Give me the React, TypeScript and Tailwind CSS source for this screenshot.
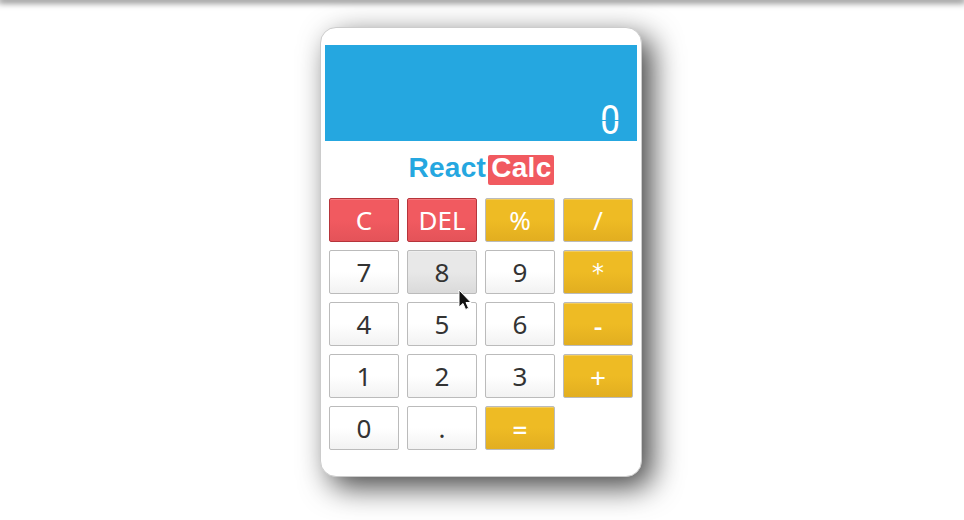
type Tone = 'light' | 'hover' | 'red' | 'gold';

const tones: Record<Tone, string> = {
  light: 'border-[#bbb] text-[#333] bg-[linear-gradient(#fff_50%,#f2f2f2)] shadow-[inset_0_1px_0_#fff]',
  hover: 'border-[#bbb] text-[#333] bg-[linear-gradient(#e8e8e8_50%,#dadada)] shadow-[inset_0_1px_0_#eee]',
  red: 'border-[#b6343b] text-white bg-[linear-gradient(#f15a60_50%,#e45359)] shadow-[inset_0_1px_0_#f47b80]',
  gold: 'border-[#bbb] text-white bg-[linear-gradient(#eebb24_50%,#e2ae20)] shadow-[inset_0_1px_0_#f3cc5b]',
};

const keys: [string, Tone][] = [
  ['C', 'red'], ['DEL', 'red'], ['%', 'gold'], ['/', 'gold'],
  ['7', 'light'], ['8', 'hover'], ['9', 'light'], ['*', 'gold'],
  ['4', 'light'], ['5', 'light'], ['6', 'light'], ['-', 'gold'],
  ['1', 'light'], ['2', 'light'], ['3', 'light'], ['+', 'gold'],
  ['0', 'light'], ['.', 'light'], ['=', 'gold'],
];

// Operators sit slightly lower and heavier than the digits.
function glyphStyle(label: string) {
  if (label === '*') return "pt-px font-['DejaVu_Sans',sans-serif] text-[24px]";
  if (label === '=') return "pt-[2px] font-['Noto_Sans',sans-serif] text-[26px] font-semibold";
  if (label === '-') return "pt-[2px] font-['Noto_Sans',sans-serif] text-[27px] font-medium";
  if (label === '+') return "pt-[2px] font-['Noto_Sans',sans-serif] text-[28px]";
  return "pb-px font-['Noto_Sans',sans-serif] text-[26px]";
}

function Key({ label, tone }: { label: string; tone: Tone }) {
  return (
    <button
      className={`flex h-11 items-center justify-center rounded-[2px] border leading-none ${glyphStyle(label)} ${tones[tone]}`}
    >
      {label}
    </button>
  );
}

export default function App() {
  return (
    <div className="relative h-[520px] w-full overflow-hidden bg-white">
      <div className="h-0 w-full shadow-[0_0_7px_2px_#444]" />
      <main className="mt-[27px] ml-[320px] h-[450px] w-[322px] rounded-[16px] border border-[#ccc] bg-white px-1 pt-[17px] shadow-[10px_10px_30px_#444]">
        <div className="flex h-24 items-end justify-end bg-[#25a7e0] pr-[17px] pb-[5px]">
          <span className="relative block origin-right scale-x-[0.86] font-['Roboto',sans-serif] text-[41px] leading-[31px] text-white">
            0
            <span className="absolute top-[15px] left-0 h-px w-full bg-[#25a7e0]" />
          </span>
        </div>
        <h1 className="mt-[14px] flex h-[30px] justify-center font-['Liberation_Sans',sans-serif] text-[28px] leading-[26px] font-bold tracking-[0.3px]">
          <span className="text-[#25a7e0]">React</span>
          <span className="ml-[2px] rounded-[2px] bg-[#f15a60] pr-[2px] pl-[3px] text-white">Calc</span>
        </h1>
        <div className="mt-[13px] grid grid-cols-4 gap-2 px-1">
          {keys.map(([label, tone]) => (
            <Key key={label} label={label} tone={tone} />
          ))}
        </div>
      </main>
      <svg className="absolute top-[289px] left-[457px] h-[23px] w-[15px]" viewBox="0 0 15 23">
        <path d="M2 1v17l4-3.5 2.6 6 3-1.3-2.6-5.7h5z" fill="#111" stroke="#fff" strokeWidth="1" />
      </svg>
    </div>
  );
}
